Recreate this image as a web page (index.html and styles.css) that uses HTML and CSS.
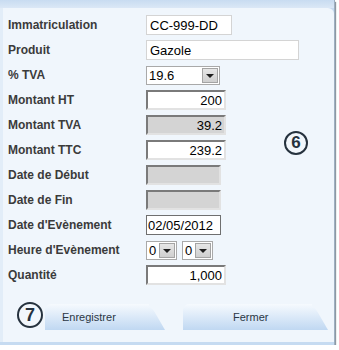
FILE: index.html
```html
<!DOCTYPE html>
<html lang="fr">
<head>
    <meta charset="UTF-8">
    <meta name="viewport" content="width=device-width, initial-scale=1.0">
    <title>Saisie carburant</title>
    <link rel="stylesheet" href="styles.css">
</head>
<body>
    <div class="window">
        <div class="panel">
            <div class="form">
                <div class="row">
                    <label class="label">Immatriculation</label>
                    <input class="field field-text w-86" type="text" value="CC-999-DD">
                </div>
                <div class="row">
                    <label class="label">Produit</label>
                    <input class="field field-text w-153" type="text" value="Gazole">
                </div>
                <div class="row">
                    <label class="label">% TVA</label>
                    <div class="select w-74"><span>19.6</span><span class="arrow"></span></div>
                </div>
                <div class="row">
                    <label class="label">Montant HT</label>
                    <input class="field field-num w-80" type="text" value="200">
                </div>
                <div class="row">
                    <label class="label">Montant TVA</label>
                    <input class="field field-num field-off w-80" type="text" value="39.2" readonly>
                </div>
                <div class="row">
                    <label class="label">Montant TTC</label>
                    <input class="field field-num w-80" type="text" value="239.2">
                </div>
                <div class="row">
                    <label class="label">Date de Début</label>
                    <input class="field field-num field-off w-75" type="text" value="" readonly>
                </div>
                <div class="row">
                    <label class="label">Date de Fin</label>
                    <input class="field field-num field-off w-75" type="text" value="" readonly>
                </div>
                <div class="row">
                    <label class="label">Date d'Evènement</label>
                    <input class="field field-date w-75" type="text" value="02/05/2012">
                </div>
                <div class="row">
                    <label class="label">Heure d'Evènement</label>
                    <div class="select w-31"><span>0</span><span class="arrow"></span></div>
                    <div class="select w-31 select-next"><span>0</span><span class="arrow"></span></div>
                </div>
                <div class="row">
                    <label class="label">Quantité</label>
                    <input class="field field-num w-80" type="text" value="1,000">
                </div>
            </div>

            <span class="marker marker-6">6</span>

            <div class="actions">
                <span class="marker marker-7">7</span>
                <button class="tab tab-save">Enregistrer</button>
                <button class="tab tab-close">Fermer</button>
            </div>
        </div>
    </div>
</body>
</html>
```

FILE: styles.css
```css
body {
    margin: 0;
    background: #ffffff;
    font-family: "Liberation Sans", Arial, sans-serif;
}

.window {
    width: 335px;
    height: 345px;
    box-sizing: border-box;
    padding-top: 8px;
    padding-bottom: 3px;
    background: linear-gradient(to bottom, #c8dcf1, #dbe8f6 8px, #c6dbf1 8px);
    border-right: 1px solid #9eb0c2;
    box-shadow: 1px 2px 1px #8e98a2;
}

.panel {
    position: relative;
    height: 100%;
    background: linear-gradient(to right, #e2edf8 0, #e2edf8 3px, #f0f6fc 3px);
    border-top-right-radius: 6px;
}

.form {
    padding: 7px 0 0 8px;
}

.row {
    display: flex;
    align-items: center;
    height: 20px;
    margin-bottom: 5px;
}

.label {
    width: 138px;
    flex-shrink: 0;
    font-size: 12px;
    font-weight: bold;
    color: #3b3b3b;
}

.field {
    height: 20px;
    box-sizing: border-box;
    margin: 0;
    padding: 0 3px;
    font-family: "Liberation Sans", Arial, sans-serif;
    font-size: 13px;
    color: #000;
    background: #fff;
    outline: none;
}

.field-text {
    border: 1px solid #d4d4d4;
}

.field-num {
    border: 2px solid;
    border-color: #7a7a7a #e2e2e2 #e2e2e2 #7a7a7a;
    padding-right: 2px;
    text-align: right;
}

.field-off {
    background: #d4d4d4;
}

.field-date {
    border: 1px solid #6f6f6f;
    padding-left: 1px;
}

.w-31 { width: 31px; }
.w-74 { width: 74px; }
.w-75 { width: 75px; }
.w-80 { width: 80px; }
.w-86 { width: 86px; }
.w-153 { width: 153px; }

.select {
    display: flex;
    align-items: center;
    justify-content: space-between;
    height: 19px;
    box-sizing: border-box;
    padding: 0 1px 0 2px;
    border: 1px solid #a9a9a9;
    background: #fff;
    font-size: 13px;
    color: #000;
}

.select-next {
    margin-left: 5px;
}

.arrow {
    position: relative;
    width: 16px;
    height: 15px;
    box-sizing: border-box;
    border: 1px solid #a4a4a4;
    background: linear-gradient(to bottom, #e6e6e6, #cfcfcf);
}

.arrow::after {
    content: "";
    position: absolute;
    left: 3px;
    top: 5px;
    border-left: 4px solid transparent;
    border-right: 4px solid transparent;
    border-top: 4px solid #1e1e1e;
}

.marker {
    display: flex;
    align-items: center;
    justify-content: center;
    box-sizing: border-box;
    border: 2.5px solid #26323e;
    border-radius: 50%;
    background: #f2f7fc;
    color: #26323e;
    font-weight: bold;
}

.marker-6 {
    position: absolute;
    left: 284px;
    top: 123px;
    width: 24px;
    height: 24px;
    font-size: 17px;
}

.marker-7 {
    width: 26px;
    height: 26px;
    font-size: 18px;
    margin-top: -2px;
    flex-shrink: 0;
}

.actions {
    display: flex;
    align-items: flex-start;
    gap: 2px;
    margin-top: 19px;
    padding-left: 17px;
}

.tab {
    position: relative;
    isolation: isolate;
    height: 26px;
    margin: 0;
    padding: 0;
    border: none;
    border-top-left-radius: 6px;
    background: linear-gradient(to bottom, #f6fafe, #c0d8f2);
    font-family: "Liberation Sans", Arial, sans-serif;
    font-size: 11px;
    color: #2a3644;
    text-align: left;
    cursor: pointer;
}

.tab::after {
    content: "";
    position: absolute;
    z-index: -1;
    top: 0;
    bottom: 0;
    right: -16px;
    width: 32px;
    background: linear-gradient(to bottom, #f6fafe, #c0d8f2);
    border-top-right-radius: 8px;
    transform: skewX(30deg);
    transform-origin: bottom;
}

.tab-save {
    width: 104px;
    padding-left: 17px;
}

.tab-close {
    width: 129px;
    margin-left: 32px;
    padding-left: 50px;
}
```
